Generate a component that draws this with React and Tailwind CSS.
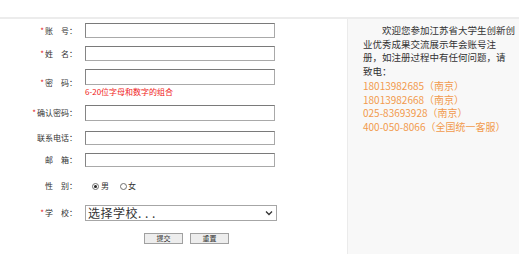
import React from "react";

const font = { fontFamily: '"Noto Sans CJK SC", "Noto Sans", sans-serif' };

function Label({ star, children }) {
  return (
    <div className="w-[77px] shrink-0 text-right text-[8px] leading-[10px] text-[#333] whitespace-pre">
      {star && <span className="text-[#e02020] mr-[1px]">*</span>}
      {children}
    </div>
  );
}

function Input({ h = "h-[15px]" }) {
  return (
    <div
      className={`w-[190px] ${h} bg-white border border-[#a9a9a9] border-t-[#7a7a7a] border-l-[#858585]`}
    />
  );
}

function Radio({ checked }) {
  return (
    <span className="w-[7px] h-[7px] rounded-full border border-[#6f6f6f] bg-white flex items-center justify-center">
      {checked && <span className="w-[3px] h-[3px] rounded-full bg-[#222]" />}
    </span>
  );
}

export default function App() {
  return (
    <div className="w-[519px] h-[254px] bg-white overflow-hidden" style={font}>
      <div className="h-[17px] bg-white" />
      <div className="h-[2px] bg-[#ececec]" />
      <div className="flex h-[235px]">
        <div className="w-[347px] shrink-0 flex flex-col">
          <div className="flex items-center gap-[8px] mt-[4px]">
            <Label star>{"账　号："}</Label>
            <Input />
          </div>
          <div className="flex items-center gap-[8px] mt-[8px]">
            <Label star>{"姓　名："}</Label>
            <Input />
          </div>
          <div className="flex items-center gap-[8px] mt-[8px]">
            <Label star>{"密　码："}</Label>
            <div className="flex flex-col">
              <Input h="h-[16px]" />
              <div className="text-[8px] leading-[11px] mt-[1px] text-[#f01818]">6-20位字母和数字的组合</div>
            </div>
          </div>
          <div className="flex items-center gap-[8px] mt-[8px]">
            <Label star>{"确认密码："}</Label>
            <Input h="h-[16px]" />
          </div>
          <div className="flex items-center gap-[8px] mt-[10px]">
            <Label>{"联系电话："}</Label>
            <Input h="h-[14px]" />
          </div>
          <div className="flex items-center gap-[8px] mt-[8px]">
            <Label>{"邮　箱："}</Label>
            <Input h="h-[14px]" />
          </div>
          <div className="flex items-center gap-[8px] mt-[12px] h-[14px]">
            <Label>{"性　别："}</Label>
            <div className="flex items-center text-[8px] leading-[10px] text-[#333] pl-[7px]">
              <Radio checked />
              <span className="ml-[2px]">男</span>
              <span className="ml-[11px]"><Radio /></span>
              <span className="ml-[1px]">女</span>
            </div>
          </div>
          <div className="flex items-center gap-[8px] mt-[12px]">
            <Label star>{"学　校："}</Label>
            <div className="w-[192px] h-[16px] bg-white border border-[#a6a6a6] flex items-center justify-between pl-[2px] pr-[3px]">
              <span className="text-[12px] leading-[14px] text-[#333] tracking-[0.5px]">选择学校. . .</span>
              <svg width="8" height="6" viewBox="0 0 8 6">
                <path d="M1 1.5 L4 4.5 L7 1.5" fill="none" stroke="#333" strokeWidth="1.3" />
              </svg>
            </div>
          </div>
          <div className="flex mt-[12px] pl-[144px] gap-[7px]">
            <div className="w-[39px] h-[11px] bg-[#ededed] border border-[#a0a0a0] text-[7px] leading-[9px] text-[#333] flex items-center justify-center">
              提交
            </div>
            <div className="w-[39px] h-[11px] bg-[#ededed] border border-[#a0a0a0] text-[7px] leading-[9px] text-[#333] flex items-center justify-center">
              重置
            </div>
          </div>
        </div>
        <div className="flex-1 bg-[#f8f8f8] border-l border-[#ebebeb] pl-[15px] pt-[5px] text-[9.5px] leading-[13.7px] text-[#333] whitespace-nowrap">
          <div className="indent-[2em]">欢迎您参加江苏省大学生创新创</div>
          <div>业优秀成果交流展示年会账号注</div>
          <div>册，如注册过程中有任何问题，请</div>
          <div>致电：</div>
          <div className="text-[10px] text-[#f29a4c]">18013982685（南京）</div>
          <div className="text-[10px] text-[#f29a4c]">18013982668（南京）</div>
          <div className="text-[10px] text-[#f29a4c]">025-83693928（南京）</div>
          <div className="text-[10px] text-[#f29a4c]">400-050-8066（全国统一客服）</div>
        </div>
      </div>
    </div>
  );
}
